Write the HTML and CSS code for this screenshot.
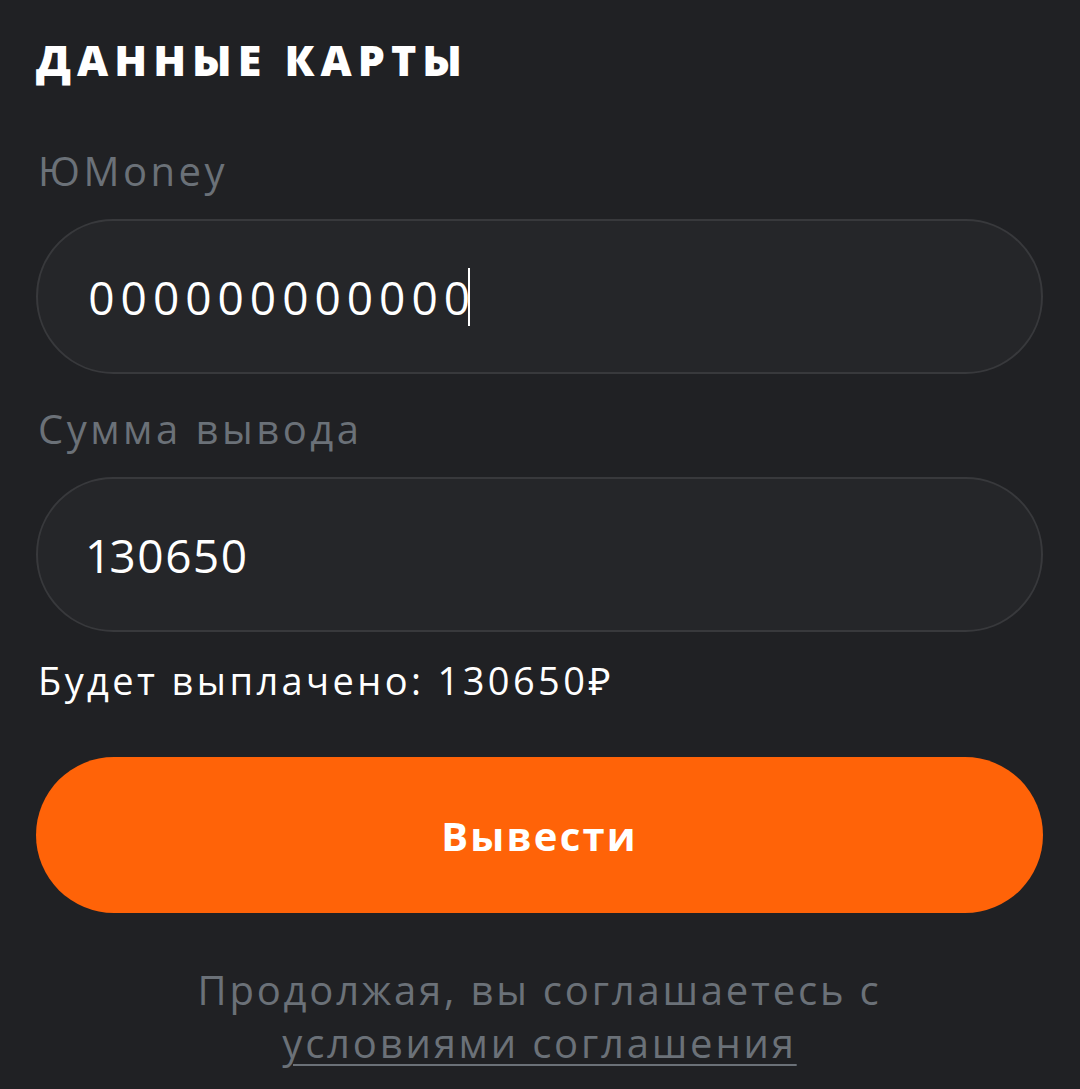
FILE: index.html
```html
<!DOCTYPE html>
<html lang="ru">
<head>
<meta charset="utf-8">
<link rel="stylesheet" href="styles.css">
</head>
<body>
<main class="page">
  <h1 class="title">ДАННЫЕ КАРТЫ</h1>
  <div class="field">
    <div class="label">ЮMoney</div>
    <div class="input"><span class="value value-card">000000000000</span><span class="caret"></span></div>
  </div>
  <div class="field">
    <div class="label">Сумма вывода</div>
    <div class="input"><span class="value">130650</span></div>
  </div>
  <div class="payout">Будет выплачено: 130650₽</div>
  <button class="submit">Вывести</button>
  <p class="terms">Продолжая, вы соглашаетесь с<br><a class="terms-link">условиями соглашения</a></p>
</main>
</body>
</html>
```

FILE: styles.css
```css
* { box-sizing: border-box; }
html, body { margin: 0; padding: 0; background: #202124; }
body {
  font-family: "Open Sans", "Noto Sans", "DejaVu Sans", sans-serif;
  color: #ffffff;
  width: 1080px;
  height: 1089px;
  overflow: hidden;
}
.page {
  padding: 30px 37px 0 36px;
  display: flex;
  flex-direction: column;
}
.title {
  margin: 0;
  font-size: 43px;
  font-weight: 800;
  line-height: 60px;
  letter-spacing: 6px;
}
.field { display: flex; flex-direction: column; }
.label {
  color: #6b7178;
  font-size: 40px;
  line-height: 60px;
  margin-top: 51px;
  margin-left: 2px;
  letter-spacing: 3.5px;
}
.field + .field .label { margin-top: 25px; }
.input {
  margin-top: 18px;
  height: 155px;
  border: 2px solid #38393c;
  border-radius: 80px;
  background: #252629;
  display: flex;
  align-items: center;
  padding-left: 50px;
}
.value {
  font-size: 46px;
  font-weight: 400;
  letter-spacing: 1.5px;
  font-variant-numeric: proportional-nums;
}
.value-card { letter-spacing: 5.5px; }
.caret {
  width: 2px;
  height: 58px;
  background: #ffffff;
  margin-left: -8px;
}
.payout {
  margin-top: 22px;
  margin-left: 2px;
  font-size: 38px;
  line-height: 52px;
  letter-spacing: 3.4px;
}
.submit {
  margin-top: 51px;
  height: 156px;
  border: none;
  border-radius: 80px;
  background: #ff6308;
  color: #ffffff;
  font-family: inherit;
  font-size: 40px;
  font-weight: 700;
  letter-spacing: 2.2px;
  cursor: pointer;
}
.terms {
  margin: 50px 0 0;
  text-align: center;
  color: #6b7178;
  font-size: 40px;
  line-height: 53px;
  letter-spacing: 2.8px;
}
.terms-link {
  color: #6b7178;
  text-decoration: underline;
  text-decoration-thickness: 2px;
  text-underline-offset: 6px;
}
```
